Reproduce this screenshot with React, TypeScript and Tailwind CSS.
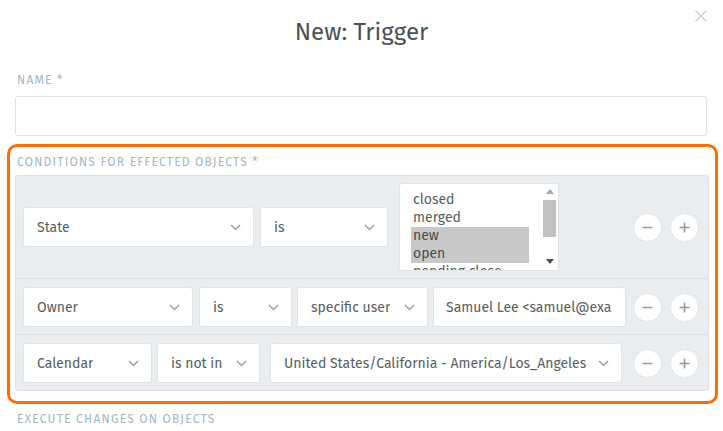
import { ReactNode } from 'react';

function Chevron() {
  return (
    <svg width="11" height="7" viewBox="0 0 11 7" className="shrink-0">
      <polyline points="1,1 5.5,5.5 10,1" fill="none" stroke="#9ba1a5" strokeWidth="1.5" />
    </svg>
  );
}

function Select({ label, className }: { label: string; className: string }) {
  return (
    <div
      className={`h-10 shrink-0 flex items-center justify-between pl-[13px] pr-[12px] bg-white border border-[#dfe4e7] rounded-[3px] text-[14px] text-[#585d61] ${className}`}
    >
      <span className="whitespace-nowrap overflow-hidden">{label}</span>
      <Chevron />
    </div>
  );
}

function RoundButton({ children }: { children: ReactNode }) {
  return (
    <div className="w-[29px] h-[29px] rounded-full bg-white border border-[#e1e5e8] flex items-center justify-center">
      {children}
    </div>
  );
}

function RowButtons() {
  return (
    <div className="ml-auto flex gap-2 pr-[9px]">
      <RoundButton>
        <svg width="11" height="11" viewBox="0 0 11 11">
          <line x1="0.5" y1="5.5" x2="10.5" y2="5.5" stroke="#9a9a9a" strokeWidth="1.6" />
        </svg>
      </RoundButton>
      <RoundButton>
        <svg width="11" height="11" viewBox="0 0 11 11">
          <line x1="0.5" y1="5.5" x2="10.5" y2="5.5" stroke="#9a9a9a" strokeWidth="1.6" />
          <line x1="5.5" y1="0.5" x2="5.5" y2="10.5" stroke="#9a9a9a" strokeWidth="1.6" />
        </svg>
      </RoundButton>
    </div>
  );
}

const states = [
  { name: 'closed', selected: false },
  { name: 'merged', selected: false },
  { name: 'new', selected: true },
  { name: 'open', selected: true },
  { name: 'pending close', selected: false },
  { name: 'pending reminder', selected: false },
];

function StateList() {
  return (
    <div className="relative ml-[11px] w-[160px] h-[88px] shrink-0 bg-white border border-[#dfe4e7] rounded-[3px] overflow-hidden">
      <div className="pl-[11px] pt-[7px]">
        {states.map((s) => (
          <div
            key={s.name}
            className={`w-[118px] h-[18px] leading-[18px] pl-[2px] text-[14px] whitespace-nowrap ${s.selected ? 'bg-[#c8c8c8] text-[#4a4a4a]' : 'text-[#585d61]'}`}
          >
            {s.name}
          </div>
        ))}
      </div>
      {/* scrollbar */}
      <div className="absolute right-[1px] top-0 bottom-0 w-[15px] bg-white flex flex-col items-center">
        <svg width="8" height="5" viewBox="0 0 8 5" className="mt-[5px]">
          <polygon points="0,5 4,0 8,5" fill="#a6a6a6" />
        </svg>
        <div className="mt-[6px] w-[13px] h-[37px] bg-[#c1c1c1]" />
        <svg width="8" height="5" viewBox="0 0 8 5" className="mt-auto mb-[6px]">
          <polygon points="0,0 8,0 4,5" fill="#505050" />
        </svg>
      </div>
    </div>
  );
}

const labelCls = 'text-[12px] leading-[16px] tracking-[0.1em] text-[#a5b7c2]';

export default function App() {
  return (
    <div className="relative w-[723px] h-[431px] bg-white overflow-hidden font-['Fira_Sans','Open_Sans',sans-serif]">
      <svg width="12" height="12" viewBox="0 0 12 12" className="absolute right-[16px] top-[10px]">
        <line x1="0.5" y1="0.5" x2="11.5" y2="11.5" stroke="#cfcfcf" strokeWidth="1.4" />
        <line x1="11.5" y1="0.5" x2="0.5" y2="11.5" stroke="#cfcfcf" strokeWidth="1.4" />
      </svg>

      <h1 className="pt-[17px] text-center text-[24px] leading-[30px] text-[#4b5054]">New: Trigger</h1>

      <div className="px-[15px] pr-[16px] mt-[25px]">
        <div className={`pl-[2px] ${labelCls}`}>NAME *</div>
        <div className="mt-[8px] h-10 bg-white border border-[#dfe4e7] rounded-[3px]" />
      </div>

      <div className="mx-[7px] mt-[8px] w-[711px] border-[3px] border-[#ff6d00] rounded-[10px] pt-[7px] pb-[10px] pl-[5px] pr-[6px]">
        <div className={`pl-[2px] ${labelCls}`}>CONDITIONS FOR EFFECTED OBJECTS *</div>
        <div className="mt-[5px] bg-[#e9edf0] border border-[#dbe1e5] rounded-[3px]">
          <div className="flex items-center pl-[7px] py-[7px] border-b border-[#d9dfe3]">
            <Select label="State" className="w-[231px]" />
            <Select label="is" className="ml-[6px] w-[128px]" />
            <StateList />
            <RowButtons />
          </div>
          <div className="flex items-center pl-[7px] pt-[8px] pb-[7px] border-b border-[#d9dfe3]">
            <Select label="Owner" className="w-[170px]" />
            <Select label="is" className="ml-[6px] w-[93px]" />
            <Select label="specific user" className="ml-[5px] w-[131px]" />
            <input
              readOnly
              value="Samuel Lee <samuel@example.com>"
              className="ml-[5px] w-[193px] h-10 pl-[12px] pr-[14px] bg-white border border-[#dfe4e7] rounded-[3px] text-[14px] text-[#585d61] outline-none"
            />
            <RowButtons />
          </div>
          <div className="flex items-center pl-[7px] pt-[8px] pb-[7px]">
            <Select label="Calendar" className="w-[129px]" />
            <Select label="is not in" className="ml-[5px] w-[103px]" />
            <Select label="United States/California - America/Los_Angeles" className="ml-[10px] w-[352px]" />
            <RowButtons />
          </div>
        </div>
      </div>

      <div className={`pl-[17px] mt-[7px] ${labelCls}`}>EXECUTE CHANGES ON OBJECTS</div>
    </div>
  );
}
